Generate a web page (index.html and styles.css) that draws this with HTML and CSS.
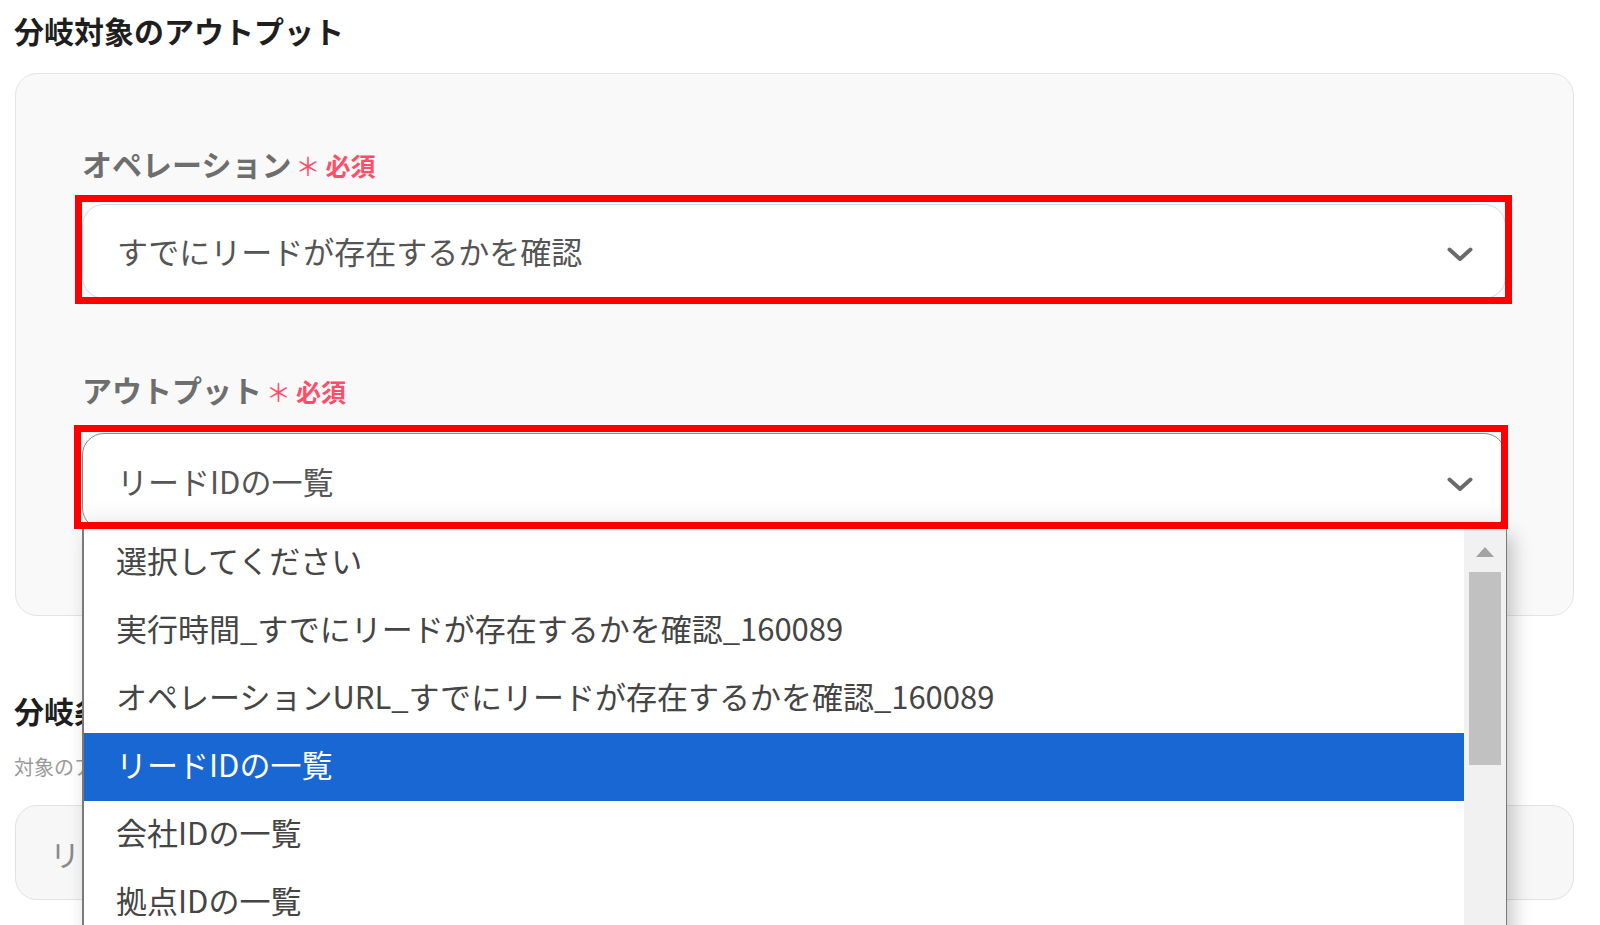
FILE: index.html
```html
<!DOCTYPE html>
<html lang="ja">
<head>
<meta charset="utf-8">
<title>分岐対象のアウトプット</title>
<link rel="stylesheet" href="styles.css">
</head>
<body>
<main class="page">
  <h2 class="section-title">分岐対象のアウトプット</h2>
  <section class="card">
    <div class="field">
      <div class="field-label">オペレーション<span class="req"><span class="req-mark">＊</span>必須</span></div>
      <div class="select">
        <span class="select-value">すでにリードが存在するかを確認</span>
        <svg class="chev" width="26" height="15" viewBox="0 0 26 15"><polyline points="2.5,2.5 13,12 23.5,2.5"/></svg>
        <div class="annot annot--one"></div>
      </div>
    </div>
    <div class="field field--second">
      <div class="field-label">アウトプット<span class="req"><span class="req-mark">＊</span>必須</span></div>
      <div class="select select--open">
        <span class="select-value">リードIDの一覧</span>
        <svg class="chev" width="26" height="15" viewBox="0 0 26 15"><polyline points="2.5,2.5 13,12 23.5,2.5"/></svg>
        <div class="annot annot--two"></div>
        <div class="dropdown">
          <ul class="options">
            <li class="option">選択してください</li>
            <li class="option">実行時間_すでにリードが存在するかを確認_160089</li>
            <li class="option">オペレーションURL_すでにリードが存在するかを確認_160089</li>
            <li class="option option--active">リードIDの一覧</li>
            <li class="option">会社IDの一覧</li>
            <li class="option">拠点IDの一覧</li>
          </ul>
          <div class="scrollbar">
            <span class="sb-arrow"></span>
            <span class="sb-thumb"></span>
          </div>
        </div>
      </div>
    </div>
  </section>
  <h2 class="section-title section-title--cond">分岐条件</h2>
  <p class="hint">対象のアウトプットの値をもとに分岐条件を設定してください</p>
  <div class="input-fake">リードIDの一覧</div>
</main>
</body>
</html>
```
FILE: styles.css
```css
html, body {
  margin: 0;
  height: 100%;
  overflow: hidden;
  background: #ffffff;
}

body {
  font-family: "Noto Sans CJK JP", "Noto Sans", sans-serif;
  color: #333;
}

.page {
  padding: 9px 26px 0 14px;
}

.section-title {
  margin: 0;
  font-size: 30px;
  line-height: 42px;
  font-weight: 700;
  color: #1e1e1e;
}

.card {
  margin: 22px 0 0 1px;
  border: 1px solid #e4e4e4;
  border-radius: 22px;
  background: #f9f9f9;
  padding: 69px 67px 85px 66px;
}

.field-label {
  display: block;
  height: 40px;
  font-size: 30px;
  line-height: 40px;
  font-weight: 700;
  color: #6e6e6e;
  margin-bottom: 21px;
}

.req {
  font-size: 25px;
  line-height: 1;
  color: #ff4d6a;
  font-weight: 700;
  margin-left: 4px;
}

.req-mark {
  font-weight: 400;
  margin-right: 5px;
}

.field--second {
  margin-top: 70px;
}

.field--second .field-label {
  margin-bottom: 24px;
}

.select {
  position: relative;
  box-sizing: border-box;
  height: 95px;
  display: flex;
  align-items: center;
  justify-content: space-between;
  padding: 0 32px 0 34px;
  background: #ffffff;
  border: 1px solid #d6dae2;
  border-radius: 22px;
  font-size: 31px;
  color: #555;
}

.select--open {
  height: 97px;
  border-color: #8a8a8a;
  background: linear-gradient(#ffffff 70%, #f1f1f1);
}

.select-value {
  line-height: 40px;
  margin-bottom: 2px;
}

.chev {
  margin-top: 6px;
  fill: none;
  stroke: #6b6b6b;
  stroke-width: 4;
  stroke-linecap: round;
  stroke-linejoin: round;
}

.annot {
  position: absolute;
  border: 7px solid #ff0000;
  pointer-events: none;
  z-index: 3;
}

.annot--one {
  left: -8px;
  right: -7px;
  top: -10px;
  bottom: -6px;
}

.annot--two {
  left: -9px;
  right: -3px;
  top: -9px;
  bottom: 0;
}

.dropdown {
  position: absolute;
  left: -1px;
  right: -2px;
  top: 100%;
  height: 420px;
  display: flex;
  background: #ffffff;
  border-left: 2px solid #7a7a7a;
  border-right: 1px solid #7a7a7a;
  box-shadow: 6px 6px 18px rgba(0, 0, 0, 0.22);
  z-index: 2;
}

.options {
  flex: 1;
  list-style: none;
  margin: 0;
  padding: 0;
}

.option {
  box-sizing: border-box;
  height: 68px;
  line-height: 62px;
  padding: 0 0 6px 32px;
  font-size: 31px;
  color: #454545;
  white-space: nowrap;
}

.option--active {
  background: #1967d2;
  color: #ffffff;
}

.scrollbar {
  position: relative;
  width: 42px;
  background: #f1f1f1;
}

.sb-arrow {
  position: absolute;
  left: 12px;
  top: 18px;
  width: 0;
  height: 0;
  border-left: 9px solid transparent;
  border-right: 9px solid transparent;
  border-bottom: 10px solid #a3a3a3;
}

.sb-thumb {
  position: absolute;
  left: 5px;
  right: 5px;
  top: 43px;
  height: 193px;
  background: #c1c1c1;
}

.section-title--cond {
  margin-top: 73px;
}

.hint {
  margin: 22px 0 0;
  font-size: 20px;
  line-height: 28px;
  color: #9a9a9a;
}

.input-fake {
  margin-top: 24px;
  box-sizing: border-box;
  height: 95px;
  display: flex;
  align-items: center;
  padding-left: 34px;
  margin-left: 1px;
  border: 1px solid #e2e2e2;
  border-radius: 22px;
  background: #f7f7f7;
  font-size: 30px;
  color: #8a8a8a;
}
```
